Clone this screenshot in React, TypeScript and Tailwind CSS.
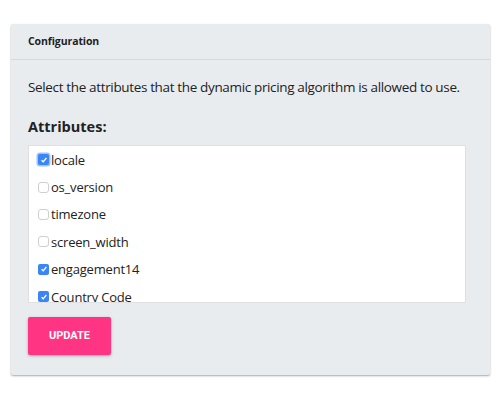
import React from "react";

const items: [string, boolean, boolean][] = [
  ["locale", true, true],
  ["os_version", false, false],
  ["timezone", false, false],
  ["screen_width", false, false],
  ["engagement14", true, false],
  ["Country Code", true, false],
];

function Box({ checked, focus }: { checked: boolean; focus: boolean }) {
  if (checked) {
    return (
      <span
        className={`inline-flex h-[11px] w-[11px] shrink-0 items-center justify-center rounded-[2px] bg-[#3a86f7] ${
          focus ? "ring-[1.5px] ring-[#9cc2f9]" : ""
        }`}
      >
        <svg width="8" height="8" viewBox="0 0 8 8">
          <path d="M1.6 4.2 L3.2 5.8 L6.4 2" fill="none" stroke="white" strokeWidth="1.3" />
        </svg>
      </span>
    );
  }
  return <span className="inline-block h-[11px] w-[11px] shrink-0 rounded-[3px] border border-[#cfcfcf] bg-white" />;
}

export default function App() {
  return (
    <div className="min-h-[400px] w-[500px] bg-white px-[11px] pt-[24px]" style={{ fontFamily: '"Open Sans", sans-serif' }}>
      <div className="w-[479px] rounded-[2px] bg-[#e9ecef] shadow-[0_1px_2px_rgba(0,0,0,0.35)]">
        <div className="flex h-[36px] items-center border-b border-[#d6d9dc] px-[17px] text-[10.5px] font-bold tracking-[-0.1px] text-[#1e1e1e]">
          Configuration
        </div>
        <div className="px-[17px] pb-[20px] pt-[17px]">
          <p className="whitespace-nowrap text-[13.5px] leading-[20px] tracking-[-0.35px] text-[#222]">
            Select the attributes that the dynamic pricing algorithm is allowed to use.
          </p>
          <div className="mt-[20px] text-[14.5px] font-bold leading-[20px] text-[#222]">Attributes:</div>
          <div className="mt-[8px] h-[158px] w-[438px] overflow-hidden border border-[#e0e0e0] bg-white">
            {items.map(([label, checked, focus]) => (
              <div key={label} className="flex h-[27.4px] items-center pl-[9px]">
                <Box checked={checked} focus={focus} />
                <span className="ml-[2px] text-[13px] leading-[20px] tracking-[-0.2px] text-[#222]">{label}</span>
              </div>
            ))}
          </div>
          <button
            className="mt-[14px] flex h-[38px] w-[83px] items-center justify-center rounded-[2px] bg-[#ff3583] text-[11px] font-bold text-white shadow-[0_1px_3px_rgba(0,0,0,0.3)]"
            style={{ fontFamily: "Roboto, sans-serif" }}
          >
            UPDATE
          </button>
        </div>
      </div>
    </div>
  );
}
